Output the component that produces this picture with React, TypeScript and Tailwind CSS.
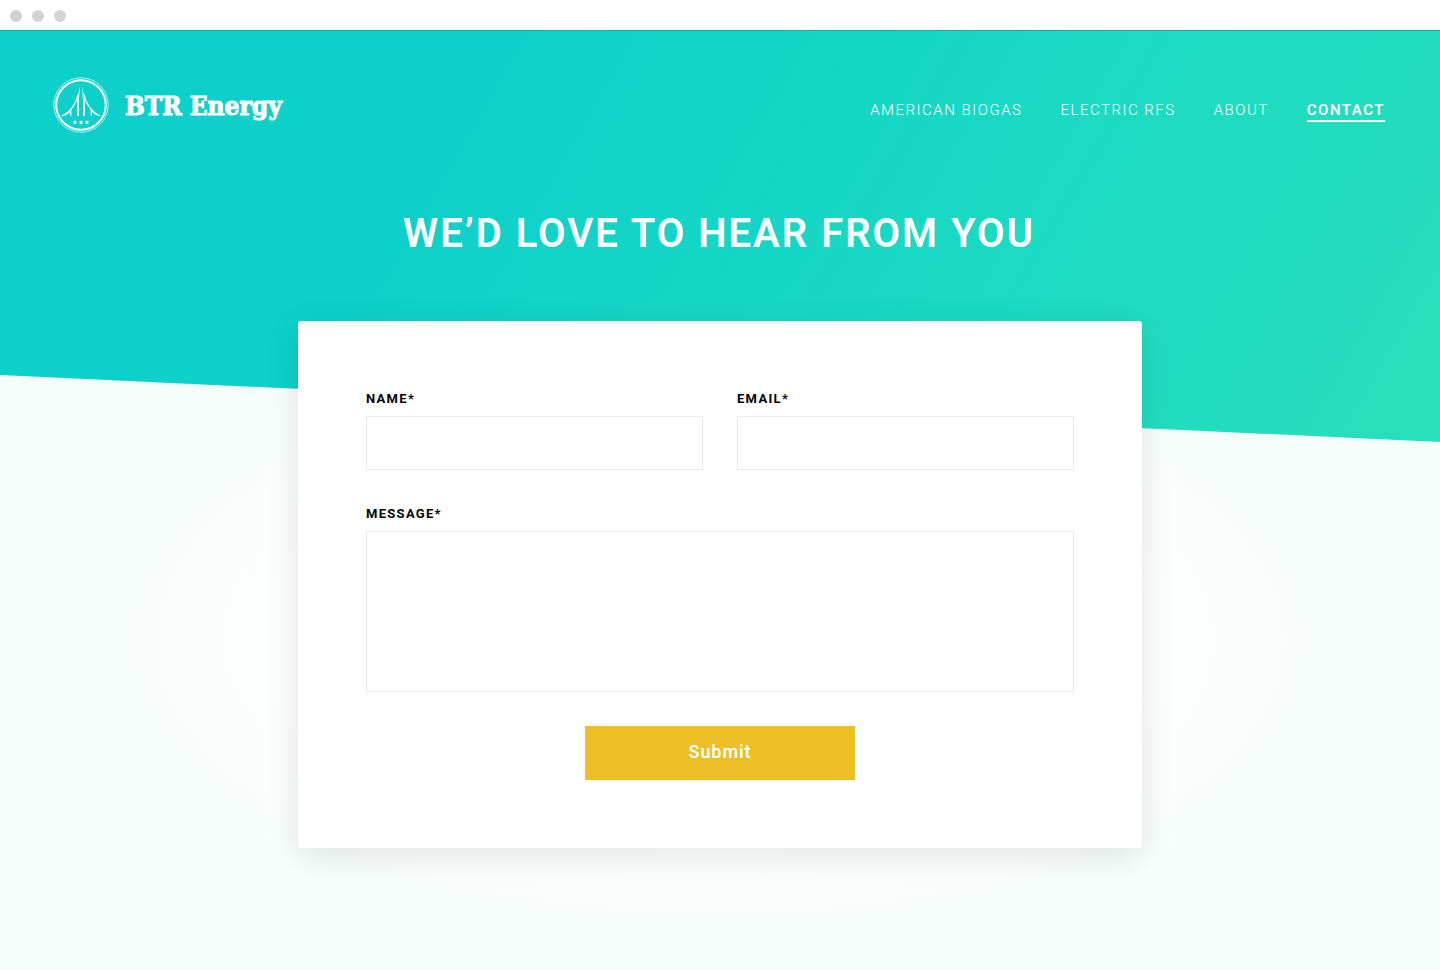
const navLinks = [
  { label: "American Biogas", active: false },
  { label: "Electric RFS", active: false },
  { label: "About", active: false },
  { label: "Contact", active: true },
];

const star = "M0 -2.2 L0.7 -0.8 L2.2 -0.6 L1.1 0.4 L1.4 1.9 L0 1.1 L-1.4 1.9 L-1.1 0.4 L-2.2 -0.6 L-0.7 -0.8 Z";

function BridgeHalf() {
  return (
    <g>
      <path d="M26.8 8.5 C26.7 14 26.1 18 26 24 V39 H24.1 V24 C24.3 19 26.2 15 26.8 8.5 Z" fill="white" />
      <path d="M24.7 18 C23.5 26.5 17 35.5 8.7 39" stroke="white" strokeWidth="1.1" />
      <path d="M8.5 39.4 C12 38.8 15 37.2 17.5 34.5 L17 33.5 C14.5 36.2 11.5 38.2 8.5 39.4 Z" fill="white" />
      <path d="M17.7 31.5 V38.8" stroke="white" strokeWidth="1.2" />
    </g>
  );
}

function Logo() {
  return (
    <svg viewBox="0 0 56 56" fill="none" className="size-14 shrink-0" aria-hidden="true">
      <circle cx="28" cy="28" r="27.2" stroke="white" strokeWidth="0.8" opacity="0.85" />
      <circle cx="28" cy="28" r="24.8" stroke="white" strokeWidth="2" />
      <BridgeHalf />
      <g transform="matrix(-1 0 0 1 56 0)">
        <BridgeHalf />
      </g>
      <path d={star} fill="white" transform="translate(22 45.3)" />
      <path d={star} fill="white" transform="translate(28 45.3)" />
      <path d={star} fill="white" transform="translate(34 45.3)" />
    </svg>
  );
}

function WindowBar() {
  return (
    <div className="flex h-[31px] items-center gap-[10px] border-b border-[#12ada3] bg-white px-[10px] pt-[2px]">
      <span className="size-3 rounded-full bg-[#d3d3d3]" />
      <span className="size-3 rounded-full bg-[#d3d3d3]" />
      <span className="size-3 rounded-full bg-[#d3d3d3]" />
    </div>
  );
}

function Header() {
  return (
    <header className="flex flex-wrap items-center justify-between gap-6">
      <a href="#home" className="flex items-center gap-4">
        <Logo />
        <span className="pt-[2px] font-['DejaVu_Serif_Condensed','DejaVu_Serif',serif] text-[26px] leading-8 font-bold [-webkit-text-stroke:1px_white]">
          BTR Energy
        </span>
      </a>
      <nav className="flex flex-wrap gap-[38px] pt-3 text-[15px] leading-5 tracking-widest uppercase">
        {navLinks.map((link) => (
          <a
            key={link.label}
            href="#nav"
            aria-current={link.active ? "page" : undefined}
            className={
              link.active
                ? "border-b-2 border-white font-semibold"
                : "border-b-2 border-transparent font-light"
            }
          >
            {link.label}
          </a>
        ))}
      </nav>
    </header>
  );
}

const labelClass = "mb-[7px] block text-[13px] leading-5 font-bold tracking-widest text-black uppercase";
const fieldClass = "block w-full border border-[#ebebeb] bg-white px-4 text-base outline-none focus:border-[#18d8c4]";

function ContactForm() {
  return (
    <form
      onSubmit={(event) => event.preventDefault()}
      className="mx-auto grid w-full max-w-[844px] grid-cols-1 gap-[34px] rounded-[3px] bg-white p-[68px] shadow-[0_8px_34px_rgba(0,0,0,0.1)] sm:grid-cols-2"
    >
      <div>
        <label htmlFor="name" className={labelClass}>Name*</label>
        <input id="name" type="text" required className={`${fieldClass} h-[54px]`} />
      </div>
      <div>
        <label htmlFor="email" className={labelClass}>Email*</label>
        <input id="email" type="email" required className={`${fieldClass} h-[54px]`} />
      </div>
      <div className="sm:col-span-2">
        <label htmlFor="message" className={labelClass}>Message*</label>
        <textarea id="message" required className={`${fieldClass} h-[161px] resize-none py-3`} />
      </div>
      <button
        type="submit"
        className="h-[54px] w-full max-w-[270px] justify-self-center bg-[#ebbf25] pb-1 text-[18px] font-semibold tracking-wider text-white sm:col-span-2"
      >
        Submit
      </button>
    </form>
  );
}

export default function App() {
  return (
    <div className="min-h-screen bg-[radial-gradient(ellipse_720px_350px_at_50%_640px,#ffffff_0%,#fefefe_55%,#f4fdfa_100%)] font-['Roboto','Liberation_Sans',sans-serif]">
      <WindowBar />
      <div className="bg-[linear-gradient(120deg,#0dd0ca_0%,#0dd0ca_30%,#18d8c4_60%,#29dfbc_100%)] pt-[46px] pr-[55px] pb-[183px] pl-[53px] text-white [clip-path:polygon(0_0,100%_0,100%_100%,0_calc(100%_-_67px))]">
        <Header />
        <h1 className="mt-[76px] text-center text-[40px] leading-[50px] font-semibold tracking-wider uppercase">
          We’d love to hear from you
        </h1>
      </div>
      <main className="relative -mt-[121px] px-4 pb-[122px]">
        <ContactForm />
      </main>
    </div>
  );
}
